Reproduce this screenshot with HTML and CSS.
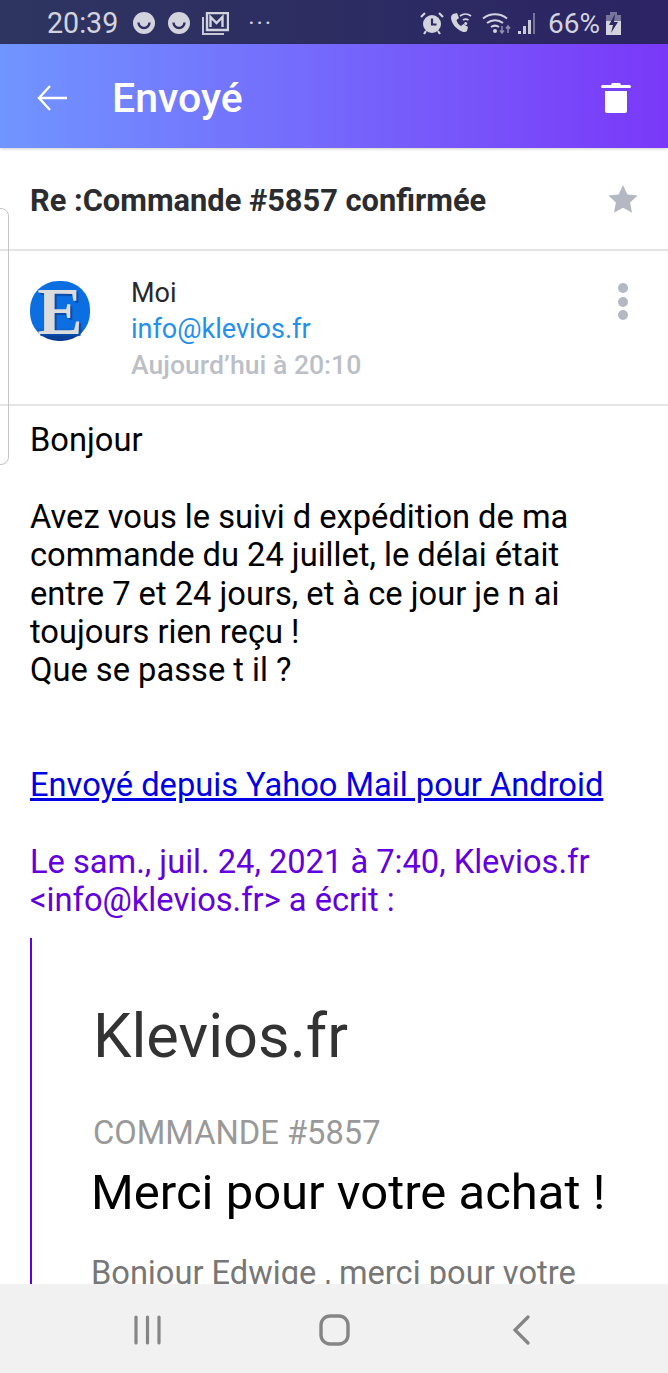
FILE: index.html
```html
<!DOCTYPE html>
<html lang="fr">
<head>
    <meta charset="UTF-8">
    <title>Envoyé</title>
    <link rel="stylesheet" href="styles.css">
</head>
<body>
    <div class="app">
        <div class="status-bar">
            <div class="status-left">
                <span class="clock">20:39</span>
                <svg class="st-ico" width="24" height="24" viewBox="0 0 24 24"><circle cx="12" cy="12" r="11" fill="#d3d3de"/><path d="M6.5 11.5a5.5 5.5 0 0 0 11 0" fill="none" stroke="#2f2e63" stroke-width="2.4"/></svg>
                <svg class="st-ico" width="24" height="24" viewBox="0 0 24 24"><circle cx="12" cy="12" r="11" fill="#d3d3de"/><path d="M6.5 11.5a5.5 5.5 0 0 0 11 0" fill="none" stroke="#2f2e63" stroke-width="2.4"/></svg>
                <svg class="st-ico" width="27" height="23" viewBox="0 0 27 23"><path d="M1 5v17h21" fill="none" stroke="#c9c9d6" stroke-width="2"/><path d="M5 1h21v17H5z" fill="none" stroke="#d3d3de" stroke-width="2.4"/><path d="M8.500 15V5l6 6 6-6v10" fill="none" stroke="#d3d3de" stroke-width="2.4"/></svg>
                <span class="dots">&middot;&middot;&middot;</span>
            </div>
            <div class="status-right">
                <svg width="24" height="24" viewBox="0 0 24 24"><circle cx="12" cy="13" r="9" fill="#d3d3de"/><path d="M12 7.500v6h4.500" fill="none" stroke="#2c2a62" stroke-width="2.200"/><path d="M1 6l4-4M23 6l-4-4M6 20l-2 3M18 20l2 3" stroke="#d3d3de" stroke-width="2.200"/></svg>
                <svg width="25" height="24" viewBox="0 0 25 24"><path d="M5 3l4-1 2 5-2.500 2c.6 2.500 2 4.500 4.500 6l2.500-2 4.500 3-1 4c-1 1-3 1.500-5 .5C8 18 3.500 12.500 3 7c0-2 .8-3.300 2-4z" fill="#d3d3de"/><path d="M12 5a9 9 0 0 1 11 0M15 9a5 5 0 0 1 5.500 0" fill="none" stroke="#d3d3de" stroke-width="1.800"/><circle cx="17.700" cy="12.500" r="1.500" fill="#d3d3de"/></svg>
                <svg class="wifi" width="30" height="24" viewBox="0 0 30 24"><path d="M1 7.500a19 19 0 0 1 24 0M5 12a13 13 0 0 1 16 0M9 16a7 7 0 0 1 8 0" fill="none" stroke="#d3d3de" stroke-width="2"/><circle cx="13" cy="20" r="2" fill="#d3d3de"/><path d="M20 15v7M18 19.500l2 2.500 2-2.500M26 22v-7M24 17.500l2-2.500 2 2.500" fill="none" stroke="#8f8eae" stroke-width="1.500"/></svg>
                <svg class="signal" width="19" height="24" viewBox="0 0 19 24"><path d="M1 20h3v3H1z" fill="#d3d3de"/><path d="M6 15h3v8H6zM11 9h3v14h-3z" fill="#c9c9d6"/><path d="M16 2h2v21h-2z" fill="#76749c"/></svg>
                <span class="battery-pct">66%</span>
                <svg class="batt" width="15" height="23" viewBox="0 0 15 23"><path d="M4 0h7v3h4v7H0V3h4z" fill="#77759a"/><path d="M0 9h15v14H0z" fill="#d3d3de"/><path d="M9 2L3 13h4l-2 8 7-11H8z" fill="#2c2a62"/></svg>
            </div>
        </div>

        <div class="top-bar">
            <svg class="back-ico" width="32" height="28" viewBox="0 0 32 28"><path d="M31 14H3M14 2L3 14l11 12" fill="none" stroke="#fff" stroke-width="2.400"/></svg>
            <h1 class="folder-title">Envoyé</h1>
            <svg class="trash-ico" width="30" height="30" viewBox="0 0 30 30"><path d="M11 0h8l1 2h8.500a1.500 1.500 0 0 1 0 3H1.500a1.500 1.500 0 0 1 0-3H10z" fill="#fff"/><path d="M4 8h22v20a2 2 0 0 1-2 2H6a2 2 0 0 1-2-2z" fill="#fff"/></svg>
        </div>

        <div class="message">
            <div class="subject-row">
                <h2 class="subject">Re :Commande #5857 confirmée</h2>
                <svg width="30" height="28" viewBox="0 0 30 28"><path d="M15 0l4.400 9.400 10.300 1.200-7.600 7 2 10.200L15 22.800 5.900 27.800l2-10.200-7.600-7 10.300-1.200z" fill="#b4b8c2"/></svg>
            </div>

            <div class="sender-row">
                <div class="avatar">E</div>
                <div class="sender-info">
                    <div class="sender-name">Moi</div>
                    <div class="sender-mail">info@klevios.fr</div>
                    <div class="sender-date">Aujourd’hui à 20:10</div>
                </div>
                <div class="more-dots"><i></i><i></i><i></i></div>
            </div>

            <div class="mail-body">
                <p class="para">Bonjour</p>
                <p class="para">Avez vous le suivi d expédition de ma commande du 24 juillet, le délai était entre 7 et 24 jours, et à ce jour je n ai toujours rien reçu !<br>Que se passe t il ?</p>
                <p class="para sig"><a href="#">Envoyé depuis Yahoo Mail pour Android</a></p>
                <p class="para quote-head">Le sam., juil. 24, 2021 à 7:40, Klevios.fr &lt;info@klevios.fr&gt; a écrit :</p>
                <div class="quote">
                    <div class="shop-name">Klevios.fr</div>
                    <div class="order-no">COMMANDE #5857</div>
                    <div class="thanks">Merci pour votre achat !</div>
                    <div class="intro">Bonjour Edwige , merci pour votre</div>
                </div>
            </div>
        </div>

        <div class="nav-bar">
            <svg width="30" height="30" viewBox="0 0 30 30"><path d="M3 2v26M14.500 2v26M26 2v26" stroke="#858585" stroke-width="3.200" stroke-linecap="round"/></svg>
            <svg width="32" height="32" viewBox="0 0 32 32"><rect x="2" y="2" width="27" height="28" rx="9" fill="none" stroke="#858585" stroke-width="3.400"/></svg>
            <svg width="20" height="30" viewBox="0 0 20 30"><path d="M16 2L3 15l13 13" fill="none" stroke="#858585" stroke-width="3.200" stroke-linecap="round"/></svg>
        </div>

        <div class="edge-handle"></div>
    </div>
</body>
</html>
```

FILE: styles.css
```css
*{
    margin: 0;
    padding: 0;
    box-sizing: border-box;
}
body{
    font-family: Roboto, "Liberation Sans", sans-serif;
    background: #fff;
}
.app{
    width: 668px;
    height: 1373px;
    position: relative;
    overflow: hidden;
    display: flex;
    flex-direction: column;
}
.status-bar{
    height: 44px;
    padding: 2px 47px 0 47px;
    background: linear-gradient(90deg, #2e3560, #2c2464);
    color: #d3d3de;
    display: flex;
    justify-content: space-between;
    align-items: center;
    flex-shrink: 0;
}
.status-left,.status-right{
    display: flex;
    align-items: center;
}
.clock{
    font-size: 28.600px;
    margin-right: 14px;
}
.st-ico{
    margin-right: 11px;
}
.dots{
    font-size: 24px;
    letter-spacing: 2px;
    margin-left: 8px;
}
.status-right svg{
    margin-right: 4px;
}
.status-right .wifi{
    margin: 0 5px 0 5px;
}
.status-right .batt{
    margin-right: 0;
}
.battery-pct{
    font-size: 28px;
    margin: 0 6px 0 8px;
}
.top-bar{
    height: 104px;
    padding: 4px 36px 0;
    background: linear-gradient(90deg, #7095ff, #7a38f8);
    display: flex;
    align-items: center;
    box-shadow: 0 1px 3px rgba(0,0,0,0.2);
    position: relative;
    flex-shrink: 0;
}
.back-ico{
    margin-right: 44px;
}
.folder-title{
    flex: 1;
    color: #fff;
    font-size: 41px;
    font-weight: 500;
}
.trash-ico{
    margin-right: 1px;
}
.message{
    flex: 1;
    overflow: hidden;
}
.subject-row{
    height: 103px;
    padding: 0 30px;
    border-bottom: 2px solid #e4e4e4;
    display: flex;
    justify-content: space-between;
    align-items: center;
}
.subject{
    font-size: 30.800px;
    font-weight: 700;
    color: #2a2c30;
    padding-top: 4px;
}
.sender-row{
    height: 155px;
    padding: 24px 30px 0;
    border-bottom: 2px solid #e4e4e4;
    display: flex;
    position: relative;
}
.avatar{
    width: 60px;
    height: 60px;
    margin: 6px 41px 0 0;
    border-radius: 47%;
    background: linear-gradient(#0b6fe2 78%, #0a3f94 92%);
    color: #dcdcdc;
    font-family: "Liberation Serif", serif;
    font-weight: 700;
    font-size: 68px;
    line-height: 60px;
    text-align: center;
    text-shadow: 2px 2px 1px #0a4aa8;
}
.sender-info{
    flex: 1;
}
.sender-name{
    font-size: 27px;
    line-height: 36px;
    color: #26282c;
}
.sender-mail{
    font-size: 27px;
    line-height: 36px;
    color: #2490ec;
}
.sender-date{
    font-size: 26.600px;
    font-weight: 500;
    line-height: 36px;
    color: #bcbfc7;
}
.more-dots{
    width: 10px;
    margin: 8px 10px 0 0;
    display: flex;
    flex-direction: column;
    gap: 3.500px;
}
.more-dots i{
    width: 10px;
    height: 10px;
    border-radius: 50%;
    background: #b4b8c2;
}
.mail-body{
    padding: 15px 30px 0;
    font-size: 32.650px;
    line-height: 38.400px;
    color: #000;
}
.para{
    margin-bottom: 38.400px;
}
.sig{
    margin-top: 76px;
}
.sig a{
    color: #0000e6;
}
.quote-head{
    color: #6200e0;
    margin-bottom: 19px;
}
.quote{
    border-left: 2px solid #6200e0;
    padding: 60px 0 0 61px;
}
.shop-name{
    font-size: 61.300px;
    line-height: 76px;
    color: #333;
}
.order-no{
    font-size: 32.700px;
    line-height: 40px;
    margin-top: 39px;
    color: #999;
}
.thanks{
    font-size: 49px;
    line-height: 60px;
    margin: 10px 0 0 -2px;
    color: #000;
}
.intro{
    font-size: 32.650px;
    line-height: 38px;
    margin: 31px 0 0 -2px;
    color: #777;
}
.nav-bar{
    height: 89px;
    background: #f1f1f1;
    padding: 2px 53px 0 54px;
    display: grid;
    grid-template-columns: repeat(3, 187px);
    justify-items: center;
    align-items: center;
    flex-shrink: 0;
}
.edge-handle{
    position: absolute;
    left: -12px;
    top: 208px;
    width: 21px;
    height: 257px;
    border: 1px solid #c4c4c4;
    border-radius: 8px;
}
```
